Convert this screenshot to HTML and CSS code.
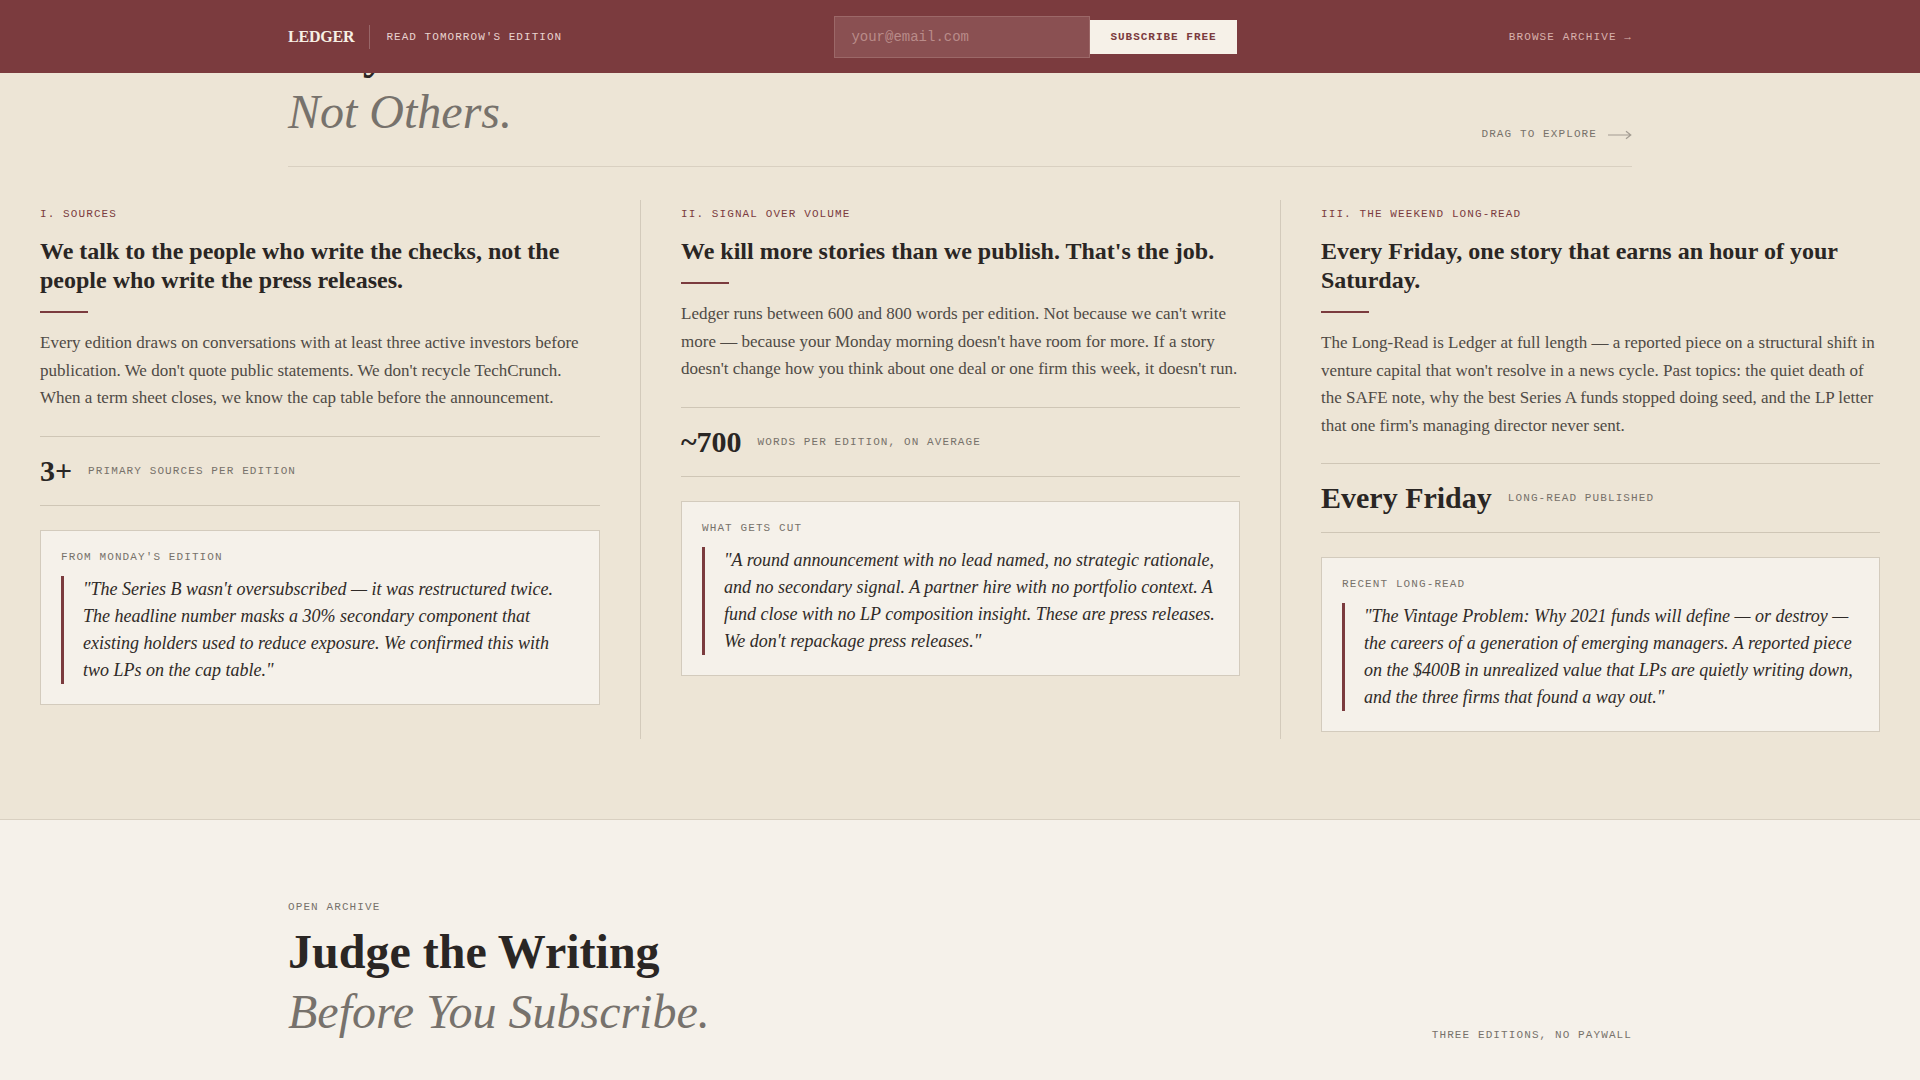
FILE: index.html
```html
<!DOCTYPE html>
<html lang="en">
<head>
<meta charset="utf-8">
<title>Ledger — Why Us, Not Others</title>
<link rel="stylesheet" href="styles.css">
</head>
<body>
<header class="topbar">
  <div class="topbar-inner">
    <div class="brand">
      <span class="logo">LEDGER</span>
      <span class="brand-sep"></span>
      <span class="brand-tag">READ TOMORROW'S EDITION</span>
    </div>
    <form class="signup">
      <input class="signup-input" type="email" placeholder="your@email.com">
      <button class="signup-btn" type="button">SUBSCRIBE FREE</button>
    </form>
    <a class="archive-link" href="#archive">BROWSE ARCHIVE →</a>
  </div>
</header>

<main>
  <section class="hero">
    <div class="hero-row">
      <h1 class="display">
        <span class="display-strong">Why Us</span>
        <span class="display-soft">Not Others.</span>
      </h1>
      <div class="drag-hint">
        <span>DRAG TO EXPLORE</span>
        <svg class="drag-arrow" width="24" height="10" viewBox="0 0 24 10" aria-hidden="true">
          <path d="M0 5H22.5M18 1.2L22.8 5L18 8.8" fill="none" stroke="currentColor" stroke-width="1.2"/>
        </svg>
      </div>
    </div>
  </section>

  <section class="pillars">
    <article class="pillar">
      <div class="pillar-label">I. SOURCES</div>
      <h2 class="pillar-title">We talk to the people who write the checks, not the people who write the press releases.</h2>
      <div class="pillar-rule"></div>
      <p class="pillar-body">Every edition draws on conversations with at least three active investors before publication. We don't quote public statements. We don't recycle TechCrunch. When a term sheet closes, we know the cap table before the announcement.</p>
      <div class="pillar-stat">
        <span class="stat-num">3+</span>
        <span class="stat-label">PRIMARY SOURCES PER EDITION</span>
      </div>
      <figure class="pillar-quote">
        <figcaption class="quote-label">FROM MONDAY'S EDITION</figcaption>
        <blockquote class="quote-text">"The Series B wasn't oversubscribed — it was restructured twice. The headline number masks a 30% secondary component that existing holders used to reduce exposure. We confirmed this with two LPs on the cap table."</blockquote>
      </figure>
    </article>

    <article class="pillar">
      <div class="pillar-label">II. SIGNAL OVER VOLUME</div>
      <h2 class="pillar-title">We kill more stories than we publish. That's the job.</h2>
      <div class="pillar-rule"></div>
      <p class="pillar-body">Ledger runs between 600 and 800 words per edition. Not because we can't write more — because your Monday morning doesn't have room for more. If a story doesn't change how you think about one deal or one firm this week, it doesn't run.</p>
      <div class="pillar-stat">
        <span class="stat-num">~700</span>
        <span class="stat-label">WORDS PER EDITION, ON AVERAGE</span>
      </div>
      <figure class="pillar-quote">
        <figcaption class="quote-label">WHAT GETS CUT</figcaption>
        <blockquote class="quote-text">"A round announcement with no lead named, no strategic rationale, and no secondary signal. A partner hire with no portfolio context. A fund close with no LP composition insight. These are press releases. We don't repackage press releases."</blockquote>
      </figure>
    </article>

    <article class="pillar">
      <div class="pillar-label">III. THE WEEKEND LONG-READ</div>
      <h2 class="pillar-title">Every Friday, one story that earns an hour of your Saturday.</h2>
      <div class="pillar-rule"></div>
      <p class="pillar-body">The Long-Read is Ledger at full length — a reported piece on a structural shift in venture capital that won't resolve in a news cycle. Past topics: the quiet death of the SAFE note, why the best Series A funds stopped doing seed, and the LP letter that one firm's managing director never sent.</p>
      <div class="pillar-stat">
        <span class="stat-num">Every Friday</span>
        <span class="stat-label">LONG-READ PUBLISHED</span>
      </div>
      <figure class="pillar-quote">
        <figcaption class="quote-label">RECENT LONG-READ</figcaption>
        <blockquote class="quote-text">"The Vintage Problem: Why 2021 funds will define — or destroy — the careers of a generation of emerging managers. A reported piece on the $400B in unrealized value that LPs are quietly writing down, and the three firms that found a way out."</blockquote>
      </figure>
    </article>
  </section>

  <section class="archive" id="archive">
    <div class="archive-row">
      <div class="archive-head">
        <div class="archive-label">OPEN ARCHIVE</div>
        <h2 class="display">
          <span class="display-strong">Judge the Writing</span>
          <span class="display-soft">Before You Subscribe.</span>
        </h2>
      </div>
      <div class="archive-note">THREE EDITIONS, NO PAYWALL</div>
    </div>
  </section>
</main>
</body>
</html>
```

FILE: styles.css
```css
* { box-sizing: border-box; }

html, body {
  margin: 0;
  padding: 0;
}

body {
  background: #ede5d6;
  color: #2a2624;
  font-family: "Liberation Serif", "Times New Roman", serif;
}

/* ---------- top bar ---------- */
.topbar {
  position: fixed;
  top: 0;
  left: 0;
  right: 0;
  height: 73px;
  background: #7b3b3e;
  z-index: 10;
}

.topbar-inner {
  width: 1344px;
  height: 100%;
  margin: 0 auto;
  display: flex;
  align-items: center;
  justify-content: space-between;
}

.brand {
  display: flex;
  align-items: center;
}

.logo {
  font-family: "Liberation Serif", serif;
  font-weight: 700;
  font-size: 16px;
  color: #f6efe4;
  letter-spacing: -0.2px;
}

.brand-sep {
  width: 1px;
  height: 24px;
  background: rgba(255, 255, 255, 0.22);
  margin: 0 16px 0 15px;
}

.brand-tag {
  font-family: "Liberation Mono", monospace;
  font-size: 11px;
  letter-spacing: 0.095em;
  color: #e9d3cf;
}

.signup {
  display: flex;
  align-items: center;
  margin: 0;
}

.signup-input {
  width: 256px;
  height: 42px;
  margin: 0;
  padding: 0 16px;
  background: #8a5052;
  border: 1px solid #9c6868;
  color: #f6efe4;
  font-family: "Liberation Mono", monospace;
  font-size: 14px;
  outline: none;
}

.signup-input::placeholder {
  color: #b98b89;
}

.signup-btn {
  height: 34px;
  margin: 0;
  padding: 0 20px;
  border: none;
  background: #f6f1e8;
  color: #7b3b3e;
  font-family: "Liberation Mono", monospace;
  font-weight: 700;
  font-size: 11px;
  letter-spacing: 0.09em;
}

.archive-link {
  font-family: "Liberation Mono", monospace;
  font-size: 11px;
  letter-spacing: 0.1em;
  color: #d8b1ac;
  text-decoration: none;
}

/* ---------- display headings ---------- */
.display {
  margin: 0;
  font-size: 48px;
  line-height: 60px;
  font-weight: 700;
}

.display-strong {
  display: block;
  color: #2a2624;
}

.display-soft {
  display: block;
  font-weight: 400;
  font-style: italic;
  color: #77726c;
}

/* ---------- hero ---------- */
.hero {
  padding-top: 22px;
}

.hero-row {
  width: 1344px;
  margin: 0 auto;
  display: flex;
  justify-content: space-between;
  align-items: flex-end;
  padding-bottom: 24px;
  border-bottom: 1px solid #d9d0c1;
}

.drag-hint {
  display: flex;
  align-items: center;
  gap: 11px;
  font-family: "Liberation Mono", monospace;
  font-size: 11px;
  letter-spacing: 0.1em;
  line-height: 13px;
  color: #77716a;
  padding-bottom: 1px;
}

.drag-arrow {
  color: #a39c92;
}

/* ---------- pillars ---------- */
.pillars {
  display: flex;
  margin-top: 33px;
  padding-bottom: 80px;
  border-bottom: 1px solid #d9d0c1;
}

.pillar {
  flex: 0 0 640px;
  padding: 6px 40px 7px;
}

.pillar + .pillar {
  border-left: 1px solid #d3cabb;
  padding-left: 40px;
}

.pillar-label {
  font-family: "Liberation Mono", monospace;
  font-size: 11px;
  line-height: 16px;
  letter-spacing: 0.1em;
  color: #7b3b3e;
}

.pillar-title {
  margin: 15px 0 0;
  font-size: 24px;
  line-height: 29px;
  font-weight: 700;
  color: #2a2624;
}

.pillar-rule {
  width: 48px;
  height: 2px;
  margin-top: 16px;
  background: #7b3b3e;
}

.pillar-body {
  margin: 16px 0 0;
  font-size: 17px;
  line-height: 27.5px;
  color: #4f4a45;
}

.pillar-stat {
  margin-top: 24px;
  padding: 20px 0;
  border-top: 1px solid #cfc6b6;
  border-bottom: 1px solid #cfc6b6;
  display: flex;
  align-items: center;
  gap: 16px;
}

.stat-num {
  font-size: 30px;
  line-height: 28px;
  font-weight: 700;
  color: #2a2624;
}

.stat-label {
  font-family: "Liberation Mono", monospace;
  font-size: 11px;
  letter-spacing: 0.1em;
  color: #77716a;
}

.pillar-quote {
  margin: 24px 0 0;
  padding: 20px;
  background: #f5f1ea;
  border: 1px solid #d3cbbd;
}

.quote-label {
  font-family: "Liberation Mono", monospace;
  font-size: 11px;
  line-height: 13px;
  letter-spacing: 0.1em;
  color: #77716a;
}

.quote-text {
  margin: 12px 0 0;
  padding-left: 19px;
  border-left: 3px solid #7b3b3e;
  font-size: 18px;
  line-height: 27px;
  font-style: italic;
  color: #2f2a27;
}

/* ---------- archive ---------- */
.archive {
  background: #f5f1ea;
  padding: 81px 0 120px;
}

.archive-row {
  width: 1344px;
  margin: 0 auto;
  display: flex;
  justify-content: space-between;
  align-items: flex-end;
}

.archive-label {
  font-family: "Liberation Mono", monospace;
  font-size: 11px;
  line-height: 13px;
  letter-spacing: 0.1em;
  color: #77716a;
  margin-bottom: 8px;
}

.archive-note {
  font-family: "Liberation Mono", monospace;
  font-size: 11px;
  line-height: 13px;
  letter-spacing: 0.1em;
  color: #77716a;
}
```
